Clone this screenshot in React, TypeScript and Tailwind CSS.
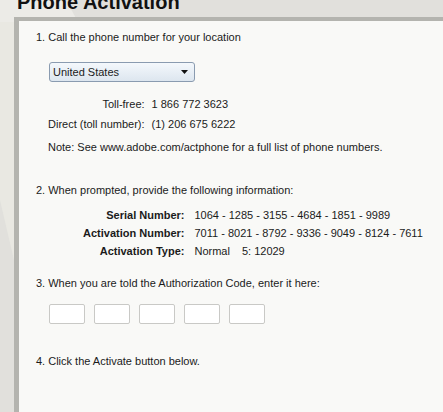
const font = { fontFamily: '"Liberation Sans", Arial, sans-serif' };

const CodeBox = () => (
  <input
    type="text"
    className="h-[20px] w-[36px] rounded-[2px] border border-[#c9c9c6] bg-white outline-none"
  />
);

const InfoRow = ({ label, value }: { label: string; value: string }) => (
  <>
    <div className="text-right font-bold">{label}</div>
    <div>{value}</div>
  </>
);

export default function App() {
  return (
    <div
      className="relative h-[412px] w-[443px] overflow-hidden bg-[#e1e0dc] text-[11px] text-[#1b1b1b]"
      style={font}
    >
      {/* faint light swoosh behind the panel */}
      <svg className="absolute left-0 top-0" width="443" height="412">
        <polygon points="0,0 66,0 78,22 0,22" fill="#ecebe7" />
        <polygon points="0,22 14,22 14,260 0,200" fill="#e9e8e2" />
      </svg>

      <div className="relative">
        <h1 className="-mt-[11px] ml-[17px] h-[28px] text-[20px] font-bold leading-[26px] text-[#111]">
          Phone Activation
        </h1>

        <div className="ml-[14px] h-[400px] border-l-[5px] border-t-[4px] border-[#b4b4af] bg-[#f9f9f7] pl-[17px] pt-[9px]">
          <p className="leading-[14px]">1. Call the phone number for your location</p>

          <div className="ml-[13px] mt-[18px] flex h-[20px] w-[146px] items-center justify-between rounded-[3px] border border-[#8a9bb0] bg-gradient-to-b from-[#f4f8fc] to-[#dde6ef] pl-[3px] pr-[6px]">
            <span>United States</span>
            <svg width="7" height="4" viewBox="0 0 7 4">
              <polygon points="0,0 7,0 3.5,4" fill="#111" />
            </svg>
          </div>

          <div className="ml-[12px] mt-[15px] grid w-fit grid-cols-[auto_auto] gap-x-[7px] gap-y-[6px] leading-[14px]">
            <div className="text-right">Toll-free:</div>
            <div>1 866 772 3623</div>
            <div className="text-right">Direct (toll number):</div>
            <div>(1) 206 675 6222</div>
          </div>

          <p className="ml-[12px] mt-[9px] leading-[14px]">
            Note: See www.adobe.com/actphone for a full list of phone numbers.
          </p>

          <p className="mt-[29px] leading-[14px]">2. When prompted, provide the following information:</p>

          <div className="ml-[47px] mt-[11px] grid w-fit grid-cols-[auto_auto] gap-x-[10px] gap-y-[4px] leading-[14px]">
            <InfoRow label="Serial Number:" value="1064 - 1285 - 3155 - 4684 - 1851 - 9989" />
            <InfoRow label="Activation Number:" value="7011 - 8021 - 8792 - 9336 - 9049 - 8124 - 7611" />
            <div className="text-right font-bold">Activation Type:</div>
            <div className="flex gap-[12px]">
              <span>Normal</span>
              <span>5: 12029</span>
            </div>
          </div>

          <p className="mt-[18px] leading-[14px]">3. When you are told the Authorization Code, enter it here:</p>

          <div className="ml-[13px] mt-[14px] flex gap-[9px]">
            <CodeBox />
            <CodeBox />
            <CodeBox />
            <CodeBox />
            <CodeBox />
          </div>

          <p className="mt-[30px] leading-[14px]">4. Click the Activate button below.</p>
        </div>
      </div>
    </div>
  );
}
